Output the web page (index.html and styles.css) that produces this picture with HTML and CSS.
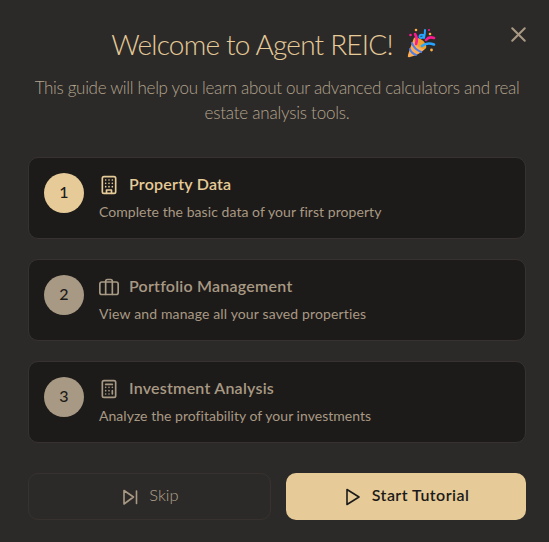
FILE: index.html
```
<!DOCTYPE html>
<html lang="en">

<head>
    <meta charset="UTF-8">
    <meta name="viewport" content="width=device-width, initial-scale=1.0">
    <title>Agent REIC</title>
    <link rel="stylesheet" href="styles.css">
</head>

<body>
    <div class="modal">
        <button class="close-btn" aria-label="Close">
            <svg viewBox="0 0 24 24"><path d="M18 6 6 18M6 6l12 12" /></svg>
        </button>

        <div class="modal-header">
            <h1><span class="title-text">Welcome to Agent REIC!</span>
                <svg class="party" viewBox="0 0 30 30">
                    <path fill="#ffad55" d="M7 10Q3 20 1 27q-1 3 2 2 9-2 15-8Q18 12 7 10z" />
                    <path fill="#f0a02c" d="M7 10c-1 3 2 7 5 9s6 3 7 1-1-6-4-8-7-4-8-2z" />
                    <g fill="none" stroke="#4d7de8" stroke-width="2">
                        <path d="M5 15q2 6 9 9" />
                        <path d="M3 21q1 4 6 6" />
                    </g>
                    <g fill="none" stroke-linecap="round" stroke-width="2.600">
                        <path stroke="#fb1a91" d="M9 16q2-5-1-10M19 12q3-4 8-2" />
                        <path stroke="#27a4ff" d="M15 18q5-4 12-1.500" />
                        <path stroke="#27a4ff" stroke-width="2" d="M18 2q0 4-1 8M16.500 7q-4-1-4 1.500t4 .5" />
                    </g>
                    <g fill="#ffb044">
                        <circle cx="9" cy="2" r="1.300" />
                        <circle cx="23" cy="6" r="1.300" />
                        <circle cx="24.500" cy="22" r="1.400" />
                    </g>
                    <g fill="#fb1a91">
                        <circle cx="3.500" cy="7" r="1.300" />
                        <circle cx="22" cy="2" r="1" />
                    </g>
                </svg>
            </h1>
            <p><span class="intro-first">This guide will help you learn about our advanced calculators and real</span><br><span class="intro-second">estate analysis tools.</span></p>
        </div>

        <div class="steps">
            <div class="step active">
                <div class="step-number">1</div>
                <div class="step-body">
                    <h3>
                        <svg viewBox="0 0 24 24"><rect x="4" y="2" width="16" height="20" rx="2" /><path d="M9 22v-4h6v4M8 6h.01M16 6h.01M12 6h.01M12 10h.01M12 14h.01M16 10h.01M16 14h.01M8 10h.01M8 14h.01" /></svg>
                        <span>Property Data</span>
                    </h3>
                    <p class="desc-property">Complete the basic data of your first property</p>
                </div>
            </div>
            <div class="step">
                <div class="step-number">2</div>
                <div class="step-body">
                    <h3>
                        <svg viewBox="0 0 24 24"><rect x="1" y="6" width="22" height="15" rx="2.500" /><path d="M8 21V5a2 2 0 0 1 2-2h4a2 2 0 0 1 2 2v16" /></svg>
                        <span>Portfolio Management</span>
                    </h3>
                    <p class="desc-portfolio">View and manage all your saved properties</p>
                </div>
            </div>
            <div class="step">
                <div class="step-number">3</div>
                <div class="step-body">
                    <h3>
                        <svg viewBox="0 0 24 24"><rect x="4" y="2" width="16" height="20" rx="2" /><path d="M8 6.500h8M16 14v4M16 10h.01M12 10h.01M8 10h.01M12 14h.01M8 14h.01M12 18h.01M8 18h.01" /></svg>
                        <span>Investment Analysis</span>
                    </h3>
                    <p class="desc-analysis">Analyze the profitability of your investments</p>
                </div>
            </div>
        </div>

        <div class="actions">
            <button class="skip-btn">
                <svg viewBox="0 0 20 20"><path d="M4 3.500l9.500 6.500L4 17zM16.500 4v12.500" /></svg>
                <span>Skip</span>
            </button>
            <button class="start-btn">
                <svg viewBox="0 0 20 20"><path d="M4 2.500l12 7.500L4 17.500z" /></svg>
                <span>Start Tutorial</span>
            </button>
        </div>
    </div>
</body>

</html>
```

FILE: styles.css
```
* {
    margin: 0;
    padding: 0;
    box-sizing: border-box;
    font-family: "Lato", "Liberation Sans", sans-serif;
    font-variant-ligatures: none;
}

body {
    background: #2c2a28;
    overflow: hidden;
}

svg {
    fill: none;
    stroke: currentColor;
    stroke-width: 2;
    stroke-linecap: round;
    stroke-linejoin: round;
    flex-shrink: 0;
}

.modal {
    position: relative;
    height: 542px;
    padding: 24px 23px 0 28px;
    color: #a89984;
}

.close-btn {
    position: absolute;
    top: 22px;
    right: 18px;
    width: 25px;
    height: 25px;
    background: none;
    border: none;
    color: #a89984;
}

.close-btn svg {
    display: block;
    width: 25px;
    height: 25px;
}

.modal-header {
    height: 133px;
    text-align: center;
    white-space: nowrap;
}

h1 {
    display: flex;
    justify-content: center;
    gap: 14px;
    height: 42px;
    margin-right: 6px;
    line-height: 41px;
    font-size: 28px;
    font-weight: 300;
    letter-spacing: -0.8px;
    color: #e6cb98;
}

.party {
    width: 30px;
    height: 30px;
    margin-top: 4px;
    stroke: none;
}

.modal-header p {
    margin-top: 9px;
    font-size: 17px;
    font-weight: 300;
    line-height: 25px;
    letter-spacing: -0.31px;
    color: #b3a48e;
}

.modal-header .intro-second {
    letter-spacing: -0.22px;
}

.steps {
    display: flex;
    flex-direction: column;
    gap: 20px;
}

.step {
    display: flex;
    gap: 15px;
    height: 82px;
    padding: 15px;
    background: #1d1b19;
    border: 1px solid #373230;
    border-radius: 10px;
}

.step-number {
    width: 40px;
    height: 40px;
    border-radius: 50%;
    background: #a89984;
    color: #1d1b19;
    font-size: 16px;
    font-weight: 500;
    line-height: 38px;
    text-align: center;
}

.active .step-number {
    background: #e6cb98;
}

h3 {
    display: flex;
    gap: 10px;
    height: 24px;
    font-size: 16px;
    font-weight: 600;
    line-height: 21px;
    letter-spacing: 0.23px;
    white-space: nowrap;
}

.active h3 {
    color: #e6cb98;
}

h3 svg {
    width: 20px;
    height: 20px;
    margin-top: 2px;
}

.step-body p {
    margin-top: 5px;
    font-size: 14px;
    line-height: 20px;
    white-space: nowrap;
}

.desc-property {
    letter-spacing: 0.06px;
}

.desc-portfolio {
    letter-spacing: 0.14px;
}

.desc-analysis {
    letter-spacing: 0.03px;
}

.actions {
    display: grid;
    grid-template-columns: 243px 240px;
    gap: 15px;
    margin-top: 30px;
}

.actions button {
    display: flex;
    align-items: center;
    justify-content: center;
    gap: 9px;
    height: 47px;
    border-radius: 10px;
    font-size: 16px;
}

.actions svg {
    width: 20px;
    height: 20px;
    stroke-width: 1.6;
}

.actions span {
    padding-bottom: 4px;
}

.skip-btn {
    background: none;
    border: 1px solid #373230;
    color: #a89984;
    font-weight: 300;
}

.skip-btn span {
    font-size: 16.5px;
    color: #b3a48e;
}

.start-btn {
    background: #e6cb98;
    border: none;
    color: #1d1b19;
    font-weight: 600;
}

.start-btn span {
    letter-spacing: 0.45px;
}
```
